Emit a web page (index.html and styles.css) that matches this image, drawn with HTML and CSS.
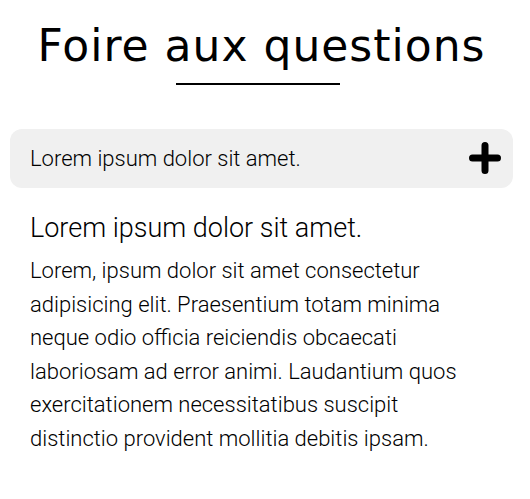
FILE: index.html
```html
<!DOCTYPE html>
<html lang="fr">
<head>
<meta charset="utf-8">
<title>FAQ</title>
<link rel="stylesheet" href="styles.css">
</head>
<body>
<main class="faq">
  <h1 class="faq-title">Foire aux questions</h1>
  <div class="faq-rule"></div>
  <div class="faq-item">
    <div class="faq-question">
      <span class="faq-question-text">Lorem ipsum dolor sit amet.</span>
      <svg class="faq-plus" width="32" height="32" viewBox="0 0 32 32" aria-hidden="true">
        <path d="M16 3.5 V28.5 M3.5 16 H28.5" stroke="#000" stroke-width="7" stroke-linecap="round" fill="none"/>
      </svg>
    </div>
  </div>
  <section class="faq-answer">
    <h2 class="faq-answer-title">Lorem ipsum dolor sit amet.</h2>
    <p class="faq-answer-text">Lorem, ipsum dolor sit amet consectetur adipisicing elit. Praesentium totam minima neque odio officia reiciendis obcaecati laboriosam ad error animi. Laudantium quos exercitationem necessitatibus suscipit distinctio provident mollitia debitis ipsam.</p>
  </section>
</main>
</body>
</html>
```

FILE: styles.css
```css
html, body {
  margin: 0;
  padding: 0;
  background: #fff;
}
body {
  font-family: Roboto, "Liberation Sans", sans-serif;
  color: #000;
}
.faq {
  width: 503px;
  margin-left: 10px;
  padding-top: 20px;
  display: flex;
  flex-direction: column;
  align-items: center;
}
.faq-title {
  margin: 0;
  font-family: "DejaVu Sans", sans-serif;
  font-weight: 400;
  font-size: 44px;
  line-height: 52px;
  letter-spacing: 1px;
  text-align: center;
}
.faq-rule {
  width: 164px;
  height: 2px;
  background: #000;
  margin-top: 11px;
  margin-left: -7px;
}
.faq-item {
  align-self: stretch;
  margin-top: 44px;
}
.faq-question {
  height: 59px;
  background: #f0f0f0;
  border-radius: 12px;
  display: flex;
  align-items: center;
  justify-content: space-between;
  padding: 0 12px 0 20px;
}
.faq-question-text {
  font-weight: 300;
  font-size: 22px;
}
.faq-plus {
  display: block;
  margin-top: -1px;
}
.faq-answer {
  align-self: stretch;
  padding: 0 33px 0 20px;
  margin-top: 23px;
}
.faq-answer-title {
  margin: 0;
  font-weight: 300;
  font-size: 27px;
  line-height: 34px;
}
.faq-answer-text {
  margin: 9px 0 0;
  font-weight: 300;
  font-size: 22px;
  line-height: 33.6px;
}
```
